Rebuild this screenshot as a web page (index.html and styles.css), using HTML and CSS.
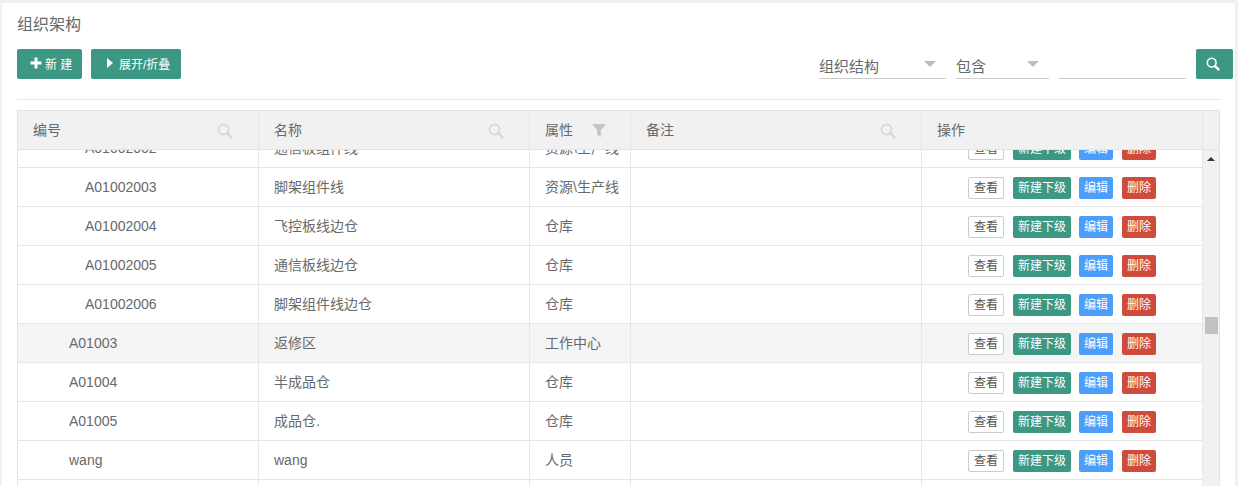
FILE: index.html
```html
<!DOCTYPE html>
<html lang="zh-CN">
<head>
<meta charset="utf-8">
<title>组织架构</title>
<link rel="stylesheet" href="styles.css">
</head>
<body>
<svg class="defs" width="0" height="0" aria-hidden="true">
  <symbol id="mag" viewBox="0 0 16 16">
    <circle cx="6.5" cy="6.5" r="5" fill="none" stroke="currentColor" stroke-width="1.8"/>
    <path d="M10.3 10.3 L14.2 14.2" stroke="currentColor" stroke-width="2.8" stroke-linecap="round"/>
  </symbol>
</svg>
<main class="panel">
  <h1 class="title">组织架构</h1>
  <div class="toolbar">
    <div class="actions">
      <button class="btn btn-new"><svg class="plus" viewBox="0 0 12 12"><path d="M4.5 0.5h3v4h4v3h-4v4h-3v-4h-4v-3h4z" fill="#fff"/></svg>新 建</button>
      <button class="btn btn-toggle"><span class="caret"></span>展开/折叠</button>
    </div>
    <div class="filters">
      <div class="select sel-a"><span>组织结构</span><i class="arrow"></i></div>
      <div class="select sel-b"><span>包含</span><i class="arrow"></i></div>
      <div class="select sel-c"></div>
      <button class="btn btn-search"><svg class="mag-w"><use href="#mag"/></svg></button>
    </div>
  </div>
  <hr class="rule">
  <section class="table">
    <div class="row head">
      <div class="cell c1"><span>编号</span><svg class="mag-g"><use href="#mag"/></svg></div>
      <div class="cell c2"><span>名称</span><svg class="mag-g"><use href="#mag"/></svg></div>
      <div class="cell c3"><span>属性</span><svg class="funnel" viewBox="0 0 14 13"><path d="M0 0h14L8.8 6.2v6.8L5.2 10.6V6.2z" fill="#c4c4c4"/></svg></div>
      <div class="cell c4"><span>备注</span><svg class="mag-g"><use href="#mag"/></svg></div>
      <div class="cell c5"><span>操作</span></div>
      <div class="cell c6"></div>
    </div>
    <div class="body">
      <div class="rows">
        <div class="inner">
          <div class="row"><div class="cell c1 l3">A01002002</div><div class="cell c2 cjk">通信板组件线</div><div class="cell c3 cjk">资源\生产线</div><div class="cell c4"></div><div class="cell c5 ops"><button class="op view">查看</button><button class="op add">新建下级</button><button class="op edit">编辑</button><button class="op del">删除</button></div></div>
          <div class="row"><div class="cell c1 l3">A01002003</div><div class="cell c2 cjk">脚架组件线</div><div class="cell c3 cjk">资源\生产线</div><div class="cell c4"></div><div class="cell c5 ops"><button class="op view">查看</button><button class="op add">新建下级</button><button class="op edit">编辑</button><button class="op del">删除</button></div></div>
          <div class="row"><div class="cell c1 l3">A01002004</div><div class="cell c2 cjk">飞控板线边仓</div><div class="cell c3 cjk">仓库</div><div class="cell c4"></div><div class="cell c5 ops"><button class="op view">查看</button><button class="op add">新建下级</button><button class="op edit">编辑</button><button class="op del">删除</button></div></div>
          <div class="row"><div class="cell c1 l3">A01002005</div><div class="cell c2 cjk">通信板线边仓</div><div class="cell c3 cjk">仓库</div><div class="cell c4"></div><div class="cell c5 ops"><button class="op view">查看</button><button class="op add">新建下级</button><button class="op edit">编辑</button><button class="op del">删除</button></div></div>
          <div class="row"><div class="cell c1 l3">A01002006</div><div class="cell c2 cjk">脚架组件线边仓</div><div class="cell c3 cjk">仓库</div><div class="cell c4"></div><div class="cell c5 ops"><button class="op view">查看</button><button class="op add">新建下级</button><button class="op edit">编辑</button><button class="op del">删除</button></div></div>
          <div class="row hover"><div class="cell c1 l2">A01003</div><div class="cell c2 cjk">返修区</div><div class="cell c3 cjk">工作中心</div><div class="cell c4"></div><div class="cell c5 ops"><button class="op view">查看</button><button class="op add">新建下级</button><button class="op edit">编辑</button><button class="op del">删除</button></div></div>
          <div class="row"><div class="cell c1 l2">A01004</div><div class="cell c2 cjk">半成品仓</div><div class="cell c3 cjk">仓库</div><div class="cell c4"></div><div class="cell c5 ops"><button class="op view">查看</button><button class="op add">新建下级</button><button class="op edit">编辑</button><button class="op del">删除</button></div></div>
          <div class="row"><div class="cell c1 l2">A01005</div><div class="cell c2 cjk">成品仓.</div><div class="cell c3 cjk">仓库</div><div class="cell c4"></div><div class="cell c5 ops"><button class="op view">查看</button><button class="op add">新建下级</button><button class="op edit">编辑</button><button class="op del">删除</button></div></div>
          <div class="row"><div class="cell c1 l2">wang</div><div class="cell c2">wang</div><div class="cell c3 cjk">人员</div><div class="cell c4"></div><div class="cell c5 ops"><button class="op view">查看</button><button class="op add">新建下级</button><button class="op edit">编辑</button><button class="op del">删除</button></div></div>
          <div class="row"><div class="cell c1 l2"></div><div class="cell c2"></div><div class="cell c3"></div><div class="cell c4"></div><div class="cell c5"></div></div>
        </div>
      </div>
      <div class="scrollbar"><i class="up"></i><i class="thumb"></i></div>
    </div>
  </section>
</main>
</body>
</html>
```

FILE: styles.css
```css
* { box-sizing: border-box; }
html, body { height: 100%; }
body {
  margin: 0;
  padding: 3px 3px 0 2px;
  background: #f1f1f1;
  overflow: hidden;
  font-family: "Liberation Sans", "Noto Sans CJK SC", sans-serif;
  font-size: 14px;
  color: #676a6c;
}
.defs { position: absolute; }
.panel {
  height: 483px;
  background: #fff;
  padding: 0 15px;
  overflow: hidden;
}
.title {
  margin: 0;
  height: 46px;
  padding-top: 12px;
  font-size: 16px;
  line-height: 20px;
  font-weight: 400;
}
.toolbar {
  display: flex;
  justify-content: space-between;
  height: 30px;
}
.actions { display: flex; gap: 9px; }
.btn {
  height: 30px;
  border: 0;
  border-radius: 2px;
  padding: 0 0 2px;
  background: #3d9883;
  color: #fff;
  font: inherit;
  font-size: 12px;
  display: flex;
  align-items: center;
}
.btn-new { width: 65px; padding-left: 13px; }
.plus { width: 12px; height: 12px; margin-right: 3px; }
.btn-toggle { width: 90px; padding-left: 16px; }
.caret {
  width: 0;
  height: 0;
  border-left: 6px solid #fff;
  border-top: 5px solid transparent;
  border-bottom: 5px solid transparent;
  margin-right: 6px;
}
.filters {
  display: flex;
  align-items: flex-start;
  margin-right: -13px;
}
.select {
  position: relative;
  width: 127px;
  height: 30px;
  margin-right: 10px;
  border-bottom: 1px solid #ccc;
  padding-top: 8px;
  line-height: 20px;
  font-size: 15px;
}
.sel-b { width: 93px; }
.arrow {
  position: absolute;
  right: 10px;
  top: 12px;
  width: 0;
  height: 0;
  border-top: 6px solid #bdbdbd;
  border-left: 6px solid transparent;
  border-right: 6px solid transparent;
}
.btn-search { width: 37px; justify-content: center; padding: 0 3px 0 0; }
.mag-w { width: 14px; height: 14px; color: #fff; }
.rule {
  margin: 20px 0 10px;
  height: 1px;
  border: 0;
  background: #e7e7e7;
}
.table {
  width: 1203px;
  border-left: 1px solid #e4e4e4;
  border-right: 1px solid #e4e4e4;
  border-top: 1px solid #e4e4e4;
}
.row { display: flex; height: 39px; border-bottom: 1px solid #e7e7e7; }
.row.head {
  height: 39px;
  background: #f1f1f1;
  border-bottom: 1px solid #e4e4e4;
}
.cell {
  flex: none;
  display: flex;
  align-items: center;
  padding-left: 15px;
  border-right: 1px solid #e7e7e7;
  white-space: nowrap;
}
.cjk { padding-bottom: 2px; }
.head .cell { justify-content: space-between; padding-right: 25px; padding-bottom: 2px; }
.c1 { width: 241px; }
.c2 { width: 271px; }
.c3 { width: 101px; }
.c4 { width: 291px; }
.c5 { width: 281px; }
.c6 { width: 16px; padding: 0; border-right: 0; }
.rows .c1.l3 { padding-left: 67px; }
.rows .c1.l2 { padding-left: 51px; }
.head .c3 { padding-right: 24px; }
.mag-g { width: 16px; height: 16px; color: #d8d8d8; flex: none; margin-top: 3px; }
.funnel { width: 14px; height: 13px; flex: none; margin-top: 3px; }
.hover { background: #f5f5f5; }
.body { display: flex; height: 336px; }
.rows { width: 1185px; overflow: hidden; }
.inner { margin-top: -21px; }
.ops { padding-left: 46px; gap: 9px; }
.op {
  height: 22px;
  border: 0;
  border-radius: 2px;
  padding: 0 0 2px;
  font: inherit;
  font-size: 12px;
  color: #fff;
  margin-top: 1px;
}
.view { width: 36px; background: #fff; border: 1px solid #ccc; color: #555; }
.add { width: 58px; background: #3d9883; }
.edit { width: 34px; background: #4c9efb; margin-left: -1px; }
.del { width: 34px; background: #cf4b3b; }
.scrollbar {
  flex: none;
  width: 17px;
  background: #f1f1f1;
  border-left: 1px solid #e7e7e7;
  display: flex;
  flex-direction: column;
  align-items: center;
}
.up {
  margin-top: 7px;
  width: 0;
  height: 0;
  border-bottom: 4px solid #333;
  border-left: 4px solid transparent;
  border-right: 4px solid transparent;
}
.thumb {
  margin-top: 156px;
  width: 13px;
  height: 17px;
  background: #c1c1c1;
}
```
